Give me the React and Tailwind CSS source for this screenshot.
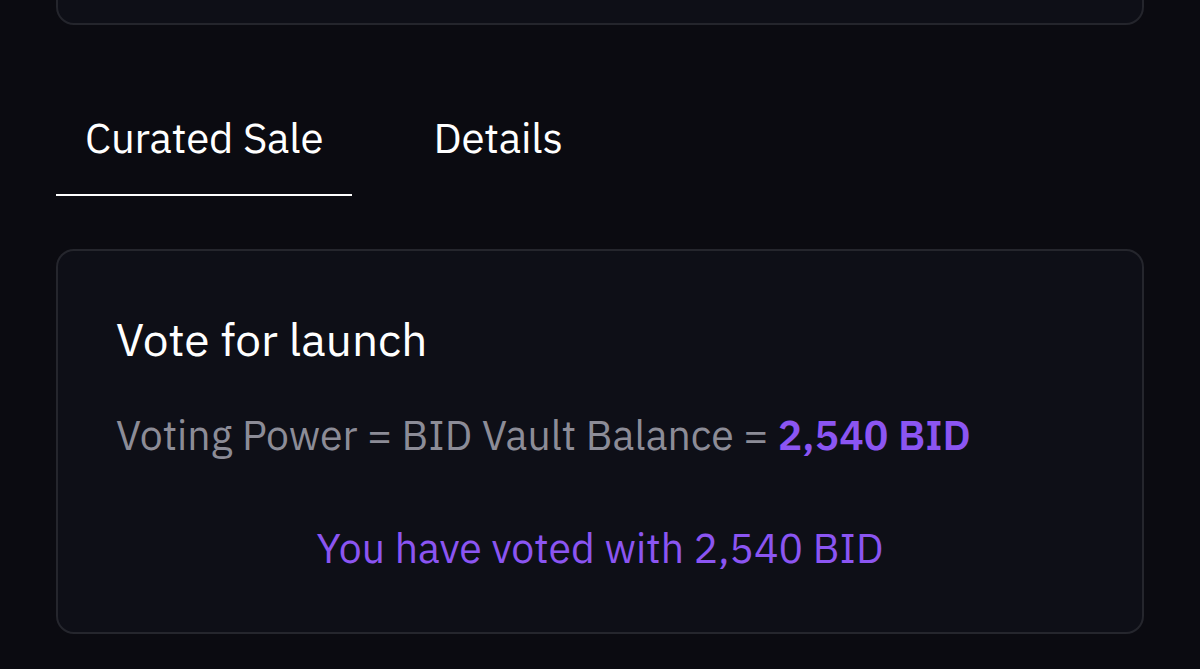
import React, { useState } from "react";

const tabs = ["Curated Sale", "Details"];

export default function App() {
  const [active, setActive] = useState(0);

  return (
    <div
      className="min-h-[669px] bg-[#0b0b11] px-[56px] text-white overflow-hidden"
      style={{ fontFamily: "'IBM Plex Sans', Inter, 'Noto Sans', sans-serif" }}
    >
      {/* previous card, cut off at the top */}
      <div className="-mt-[30px] h-[55px] rounded-[18px] border-2 border-[#24252c] bg-[#0e0f17]" />

      {/* Tabs */}
      <div className="mt-[89px] flex items-end gap-[52px]">
        {tabs.map((tab, i) => (
          <button
            key={tab}
            onClick={() => setActive(i)}
            className={`px-[29px] pb-[32px] text-[42px] leading-[48px] tracking-[-0.2px] ${
              active === i
                ? "border-b-2 border-white text-white"
                : "border-b-2 border-transparent text-white"
            }`}
          >
            {tab}
          </button>
        ))}
      </div>

      {/* Vote card */}
      <div className="mt-[53px] h-[385px] rounded-[18px] border-2 border-[#25262d] bg-[#0e0f17] px-[58px] pt-[58px]">
        <h2 className="text-[46px] leading-[60px] text-white">Vote for launch</h2>
        <p className="mt-[41px] text-[41px] leading-[50px] text-[#8c8c97]">
          Voting Power = BID Vault Balance ={" "}
          <span className="font-semibold text-[#8b55f2]">2,540 BID</span>
        </p>
        <p className="mt-[63px] text-center text-[41px] leading-[50px] text-[#8b55f2]">
          You have voted with 2,540 BID
        </p>
      </div>
    </div>
  );
}
